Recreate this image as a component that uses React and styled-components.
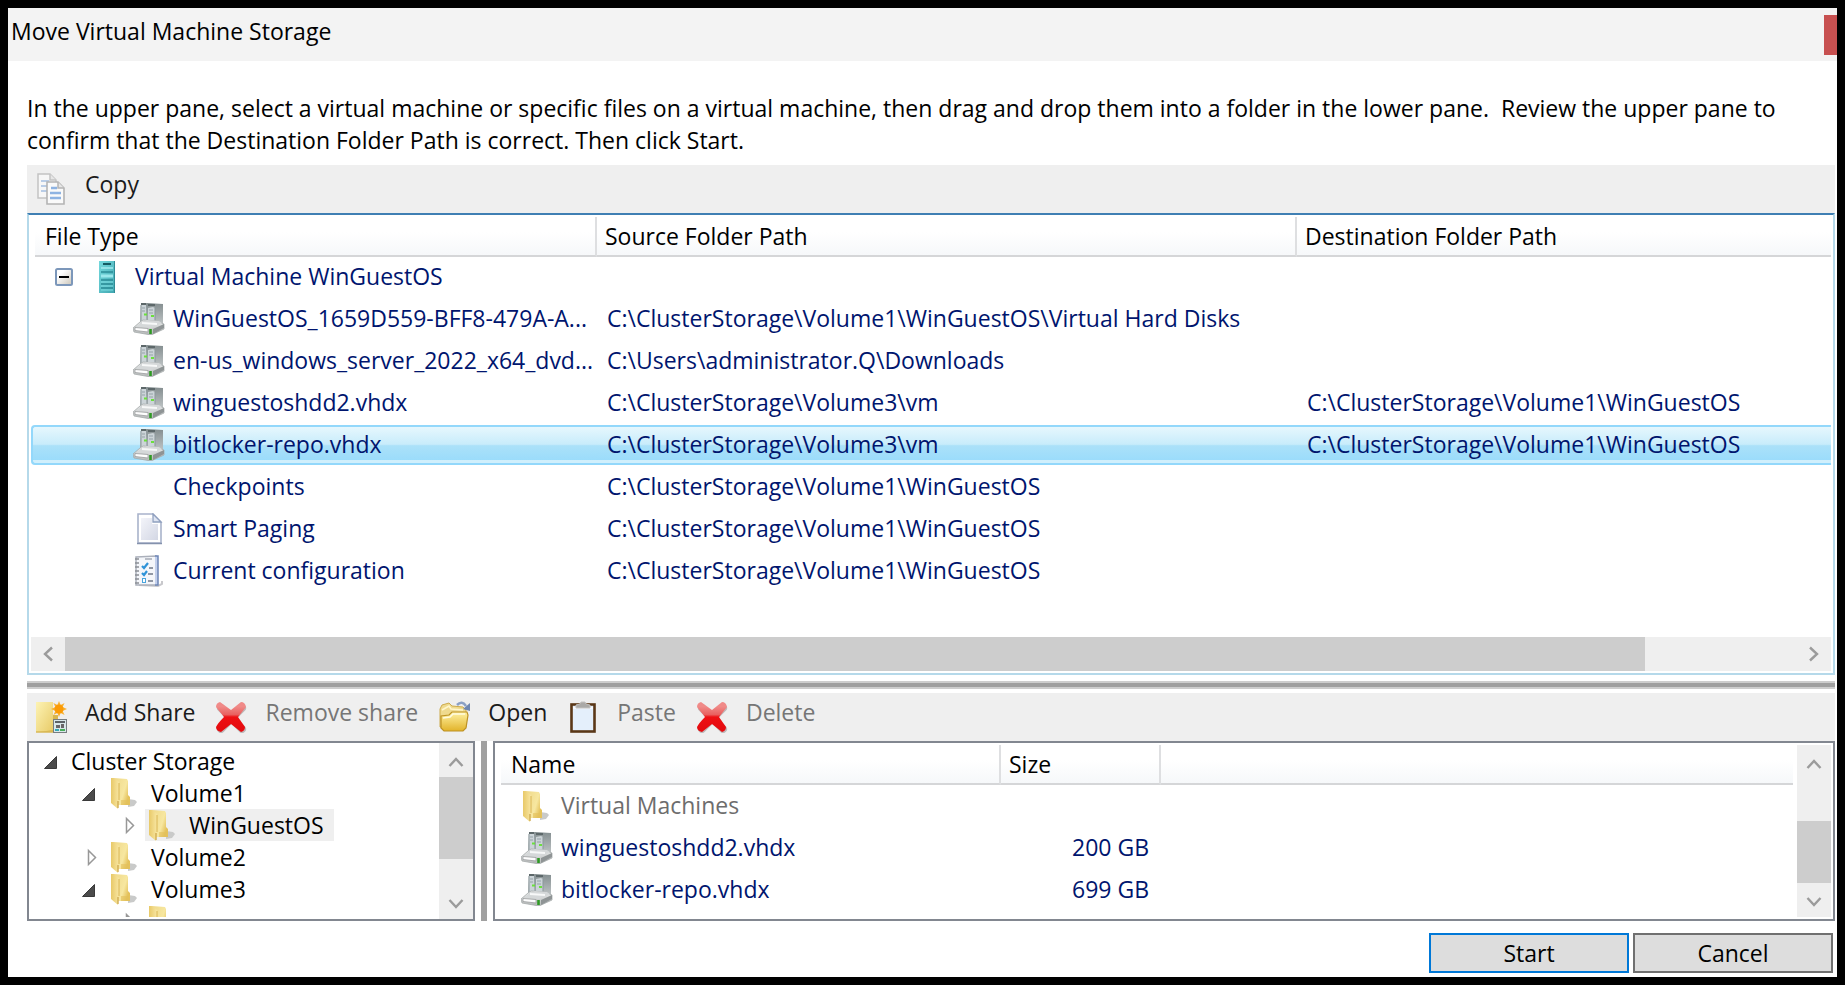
import React from "react";
import styled, { createGlobalStyle, css } from "styled-components";

const navy = "#00156e";
const FONT = '"Open Sans", "Noto Sans", "Liberation Sans", sans-serif';

const GlobalStyle = createGlobalStyle`
  *, *::before, *::after { box-sizing: border-box; }
  body { margin: 0; background: #000; color: #000; font: 23px/32px ${FONT}; }
  button { font: inherit; color: inherit; margin: 0; padding: 0; border: 0; background: none; }
  svg { display: block; flex: none; }
`;

const Dialog = styled.main`
  display: flex;
  flex-direction: column;
  min-height: 100vh;
  border: 8px solid #000;
  background: #fff;
`;

const TitleBar = styled.header`
  display: flex;
  align-items: center;
  justify-content: space-between;
  height: 53px;
  padding-left: 3px;
  background: #f3f3f3;
`;

const Title = styled.h1`
  margin: 0;
  padding-bottom: 8px;
  font-size: 23px;
  font-weight: 400;
  line-height: 32px;
`;

const CloseButton = styled.button`
  width: 13px;
  height: 40px;
  background: #c75050;
`;

const Content = styled.div`
  display: flex;
  flex: 1;
  flex-direction: column;
  padding: 31px 2px 4px 19px;
`;

const Instructions = styled.p`
  margin: 0;
  padding-bottom: 9px;
  white-space: pre-wrap;
`;

const Toolbar = styled.div`
  display: flex;
  gap: 20px;
  height: 48px;
  padding-left: 8px;
  background: #efefef;
`;

const ToolButton = styled.button`
  display: flex;
  align-items: center;
  gap: 18px;
  height: 48px;
  color: ${(p) => (p.disabled ? "#767676" : "#1b1b1b")};
`;

const ToolLabel = styled.span`
  align-self: flex-start;
  line-height: 38px;
`;

const UpperPane = styled.section`
  display: flex;
  flex: 1;
  flex-direction: column;
  justify-content: space-between;
  min-height: 462px;
  padding: 0 2px 2px;
  border: 2px solid #b5d9ea;
  border-top-color: #3f7fb3;
`;

const Table = styled.table`
  width: 100%;
  table-layout: fixed;
  border-spacing: 0 2px;
`;

const Col = styled.col`
  width: ${(p) => p.$width};
`;

const Th = styled.th`
  height: ${(p) => p.$height};
  padding: 0;
  font-weight: 400;
  text-align: left;
  vertical-align: top;
`;

const ThLabel = styled.div`
  height: 40px;
  margin-bottom: -2px;
  margin-left: ${(p) => (p.$first ? "4px" : "0")};
  padding: 3px ${(p) => (p.$first ? "10px" : "8px")};
  border-bottom: 2px solid #d5d6d8;
  border-right: ${(p) => (p.$last ? "0" : "2px solid #dedfe1")};
  background: linear-gradient(#fff 40%, #f6f8fa);
  white-space: nowrap;
`;

const selectedCell = css`
  border-top: 2px solid #93d8fb;
  border-bottom: 2px solid #93d8fb;
  background: linear-gradient(#e6f7fd, #c8ecfb 48%, #abe1f9 52%, #9bdcfb 92%, #d0effc 93%);
  &:first-child {
    border-left: 2px solid #93d8fb;
    border-radius: 4px 0 0 4px;
  }
`;

const Td = styled.td`
  height: 40px;
  padding: 0 12px 2px 10px;
  border: 0 solid transparent;
  color: ${(p) => (p.$muted ? "#6d6d6d" : navy)};
  text-align: ${(p) => (p.$right ? "right" : "left")};
  white-space: nowrap;
  line-height: 32px;
  ${(p) => p.$selected && selectedCell}
`;

const NameTd = styled(Td)`
  padding: 0;
`;

const NameCell = styled.div`
  display: flex;
  align-items: center;
  height: 36px;
  gap: ${(p) => (p.$root ? "12px" : "8px")};
  padding-left: ${(p) => p.$indent};
`;

const NameText = styled.span`
  padding-bottom: 2px;
`;

const IconSlot = styled.span`
  display: flex;
  width: 32px;
  height: 32px;
`;

const CollapseButton = styled.button`
  width: 18px;
  height: 18px;
  margin-right: 6px;
`;

const HScroll = styled.div`
  display: flex;
  height: 34px;
  background: #efefef;
`;

const VScroll = styled.div`
  display: flex;
  flex: none;
  flex-direction: column;
  width: 34px;
  background: #efefef;
`;

const ScrollButton = styled.button`
  flex: none;
  width: 34px;
  height: 34px;
`;

const Track = styled.div`
  display: flex;
  flex: 1;
  flex-direction: ${(p) => (p.$vertical ? "column" : "row")};
`;

const Space = styled.div`
  flex: ${(p) => p.$share};
`;

const Thumb = styled.div`
  flex: ${(p) => p.$share};
  background: #cdcdcd;
`;

const HSplitter = styled.div`
  height: 8px;
  margin: 6px 0 4px;
  border: solid #cdcdcd;
  border-width: 2px 0;
  background: #9f9f9f;
`;

const LowerPanes = styled.div`
  display: grid;
  grid-template-columns: 448px 18px minmax(0, 1fr);
  height: 180px;
`;

const VSplitter = styled.div`
  justify-self: center;
  width: 6px;
  background: #a0a0a0;
`;

const TreePane = styled.nav`
  display: flex;
  min-width: 0;
  border: 2px solid #828790;
`;

const TreeList = styled.ul`
  flex: 1;
  height: 172px;
  margin: 2px 0;
  padding: 0;
  overflow: hidden;
  list-style: none;
`;

const TreeRow = styled.li`
  display: flex;
  height: 32px;
  padding-left: ${(p) => 13 + p.$level * 38}px;
`;

const TreeToggle = styled.button`
  width: 27px;
  height: 32px;
`;

const TreeItem = styled.span`
  display: flex;
  gap: 10px;
  height: 32px;
  padding: 0 10px 0 2px;
  background: ${(p) => (p.$selected ? "#efefef" : "transparent")};
`;

const ListPane = styled.section`
  display: flex;
  gap: 4px;
  padding: 0 2px;
  border: 2px solid #828790;
  ${VScroll} { margin: 2px 0; }
`;

const ListBody = styled.div`
  flex: 1;
  min-width: 0;
`;

const Footer = styled.footer`
  display: flex;
  justify-content: flex-end;
  gap: 4px;
  padding: 12px 2px 0 0;
`;

const PushButton = styled.button`
  width: 200px;
  height: 40px;
  border: 2px solid ${(p) => (p.$primary ? "#0078d7" : "#707070")};
  background: #ddd;
`;

/* ---- Icons ---- */

const Chevron = ({ dir }) => {
  const d = {
    left: "M21 10.500L14 17L21 23.500",
    right: "M13 10.500L20 17L13 23.500",
    up: "M10.500 23L17 16L23.500 23",
    down: "M10.500 15L17 22L23.500 15",
  }[dir];
  return (
    <svg width="34" height="34" viewBox="0 0 34 34" fill="none" stroke="#9b9b9b" strokeWidth="2.4">
      <path d={d} />
    </svg>
  );
};

const CopyIcon = () => (
  <svg width="32" height="32" viewBox="0 0 32 32">
    <path d="M3 1h12l6 6v18H3z" fill="#f7f7f7" stroke="#c3c3c3" strokeWidth="1.500" />
    <path d="M15 1v6h6" fill="#e6e6e6" stroke="#c3c3c3" strokeWidth="1.500" />
    <path d="M6 8h8M6 13h6M6 18h6" stroke="#b8cce6" strokeWidth="2" />
    <path d="M12 9h11l6 6v16H12z" fill="#fafafa" stroke="#b4b4b4" strokeWidth="1.600" />
    <path d="M23 9v6h6" fill="#e6e6e6" stroke="#b4b4b4" strokeWidth="1.500" />
    <path d="M16 15h6M15 20h11M15 25h11" stroke="#8eb3e2" strokeWidth="2.400" />
  </svg>
);

const MinusBox = () => (
  <svg width="18" height="18" viewBox="0 0 18 18">
    <defs>
      <linearGradient id="minus" x2="1" y2="1">
        <stop offset="0.3" stopColor="#fff" />
        <stop offset="1" stopColor="#cbc5b8" />
      </linearGradient>
    </defs>
    <rect x="1" y="1" width="16" height="16" rx="1.500" fill="url(#minus)" stroke="#7c97ba" strokeWidth="2" />
    <path d="M4 9h10" stroke="#000" strokeWidth="2" />
  </svg>
);

const ServerIcon = () => (
  <svg width="32" height="32" viewBox="0 0 32 32">
    <defs>
      <linearGradient id="teal" x2="1" y2="1">
        <stop offset="0" stopColor="#74d9dd" />
        <stop offset="1" stopColor="#3fa6b0" />
      </linearGradient>
    </defs>
    <rect x="8" width="16" height="32" fill="url(#teal)" />
    <path d="M12 3h8" stroke="#145b63" strokeWidth="2" />
    <path d="M10 7h12" stroke="#a5edf0" strokeWidth="1.500" />
    <path d="M10 11h12M10 19h12M10 23h12M10 27h12" stroke="#2b8c96" strokeWidth="1.500" />
    <path d="M10 15h12" stroke="#9be8ec" strokeWidth="3" />
    <path d="M10 21h12M10 25h12M10 29h12" stroke="#7fdde1" strokeWidth="1.200" />
    <path d="M23.500 0v32" stroke="#308b95" />
  </svg>
);

const DriveIcon = () => (
  <svg width="32" height="32" viewBox="0 0 32 32">
    <defs>
      <linearGradient id="side" x2="0" y2="1">
        <stop offset="0" stopColor="#848e90" />
        <stop offset="1" stopColor="#c3c8c9" />
      </linearGradient>
      <linearGradient id="base" x2="0" y2="1">
        <stop offset="0" stopColor="#eceeee" />
        <stop offset="1" stopColor="#b4b7b7" />
      </linearGradient>
    </defs>
    <path d="M8 1l6-1 16 1v20l-7 2-16-4z" fill="url(#side)" />
    <path d="M8 2l5-1 1 18-6-1zM15 5l5-1 2 1v14h-7z" fill="#ccd4d8" />
    <path d="M8 2v17M14 2v16M22 5v15" stroke="#8b979b" />
    <path d="M8 1h5M15 2h7" stroke="#5d686a" strokeWidth="1.800" />
    <path d="M9 5h3M16 7h4M9 8h3M16 10h4" stroke="#95a2a8" />
    <path d="M11 11.500h3M18 13h3" stroke="#6be03c" strokeWidth="2" />
    <path d="M0 25l7-6 3-2 14 1 7 3v5l-13 6L1 29z" fill="url(#base)" stroke="#a5a9aa" strokeWidth="0.800" />
    <path d="M8 19l6-2 12 1 3 2-11 5-14-1z" fill="#d5d8d9" />
    <path d="M9 20l15 1" stroke="#f7f8f8" strokeWidth="2" />
    <path d="M2 24.500l13 1v3.500l-13-1.500z" fill="#fdfdfd" stroke="#9a9d9e" strokeWidth="0.800" />
    <path d="M20 26l11-5v4l-11 6z" fill="#8f9495" />
    <path d="M17.500 26v5" stroke="#2f9a24" strokeWidth="2.600" />
  </svg>
);

const PageIcon = () => (
  <svg width="32" height="32" viewBox="0 0 32 32">
    <defs>
      <linearGradient id="sheet" x2="1" y2="1">
        <stop offset="0" stopColor="#f3f4fa" />
        <stop offset="1" stopColor="#d3d7e4" />
      </linearGradient>
    </defs>
    <path d="M5 1h15l8 8v21H5z" fill="#fff" stroke="#a9b3cb" strokeWidth="1.600" />
    <path d="M8 5h11v6h6v16H8z" fill="url(#sheet)" />
    <path d="M20 1v8h8z" fill="#dfe5f2" stroke="#8fa0bf" strokeWidth="1.300" />
    <path d="M4 30.500h25" stroke="#8492ad" strokeWidth="1.500" />
  </svg>
);

const ConfigIcon = () => (
  <svg width="32" height="32" viewBox="0 0 32 32">
    <path d="M6 30l19 1 4-2v-3" fill="none" stroke="#c8c8cc" strokeWidth="2" />
    <path d="M3 2l20-1v29H3z" fill="#f4f6fa" stroke="#abb0bb" strokeWidth="1.500" />
    <path d="M22 1h3v29h-3" fill="#c3d0ec" stroke="#6d85b5" strokeWidth="1.500" />
    <path d="M2 4h4M2 8h4M2 12h4M2 16h4M2 20h4M2 24h4M2 28h4" stroke="#8b8e95" strokeWidth="1.600" />
    <path d="M12 4h7" stroke="#a6aab4" strokeWidth="1.500" />
    <path d="M9 11l2 2 4-5M9 18l2 2 3-4" fill="none" stroke="#2f93d8" strokeWidth="2.200" />
    <path d="M16 13h4M15 19h5M15 26h5" stroke="#6f7888" strokeWidth="1.600" />
    <rect x="9.500" y="23.500" width="3" height="4" fill="#fff" stroke="#4aa5dd" />
  </svg>
);

const FolderIcon = () => (
  <svg width="32" height="32" viewBox="0 0 32 32">
    <defs>
      <linearGradient id="folderBack" x2="1" y2="0.500">
        <stop offset="0" stopColor="#efd888" />
        <stop offset="0.700" stopColor="#f7e7a0" />
        <stop offset="1" stopColor="#e4c25c" />
      </linearGradient>
      <linearGradient id="folderFront" x2="1" y2="0">
        <stop offset="0" stopColor="#e8c968" />
        <stop offset="1" stopColor="#f8e6a2" />
      </linearGradient>
    </defs>
    <path d="M19 22l7 1 2 2-3 4-6 1z" fill="#c9cac9" />
    <path d="M5 1l13 1 1 2v14l2 2v8H9z" fill="url(#folderBack)" />
    <path d="M2 1l3 0 5 4v18l-1 9-7-6z" fill="url(#folderFront)" />
    <path d="M10 6v17" stroke="#d9b654" />
    <path d="M9 24v7" stroke="#c9a245" strokeWidth="1.200" />
    <path d="M12 23h8v5h-8z" fill="#e2c05a" opacity="0.600" />
  </svg>
);

const AddShareIcon = () => (
  <svg width="32" height="32" viewBox="0 0 32 32">
    <defs>
      <linearGradient id="share" x2="1" y2="1">
        <stop offset="0" stopColor="#fdf3b4" />
        <stop offset="1" stopColor="#e8cb68" />
      </linearGradient>
    </defs>
    <path d="M1 1h17v30H1z" fill="url(#share)" />
    <path d="M18 14h5v17H5l13-2z" fill="#d9b64e" />
    <path d="M1 31h18" stroke="#d8b856" strokeWidth="1.500" />
    <path
      d="M24 0l1.600 4 4-2-2 4 4.400 2-4.400 2 2 4-4-2L24 16l-1.600-4-4 2 2-4L16 8l4.400-2-2-4 4 2z"
      fill="#f9b233"
    />
    <circle cx="24" cy="8" r="4.500" fill="#fb9b06" />
    <rect x="18.500" y="18.500" width="13" height="13" fill="#d9e7ea" stroke="#777d80" />
    <path d="M20 21h10" stroke="#5d6367" strokeWidth="2" />
    <path d="M21 24h4v3h-4zM26 23h3v4h-3z" fill="#6a6668" />
    <path d="M20 29h4" stroke="#36a9b7" strokeWidth="2" />
    <path d="M25 29h5" stroke="#49ad5b" strokeWidth="2" />
  </svg>
);

const CrossIcon = () => (
  <svg width="32" height="32" viewBox="0 0 32 32">
    <defs>
      <linearGradient id="cross" x2="0" y2="1">
        <stop offset="0.150" stopColor="#f08a88" />
        <stop offset="0.420" stopColor="#e9605f" />
        <stop offset="0.500" stopColor="#ee1013" />
        <stop offset="1" stopColor="#e30a0e" />
      </linearGradient>
    </defs>
    <path d="M6 7L27 28M27 7L6 28" stroke="#8d8383" strokeOpacity="0.500" strokeWidth="8" strokeLinecap="round" />
    <path
      d="M5 1Q1 2 1 6L9 16Q3 22 1 26Q1 30 6 31L16 23L26 31Q30 30 30 26L23 16L31 6Q30 1 26 1L16 9Z"
      fill="url(#cross)"
    />
  </svg>
);

const OpenIcon = () => (
  <svg width="32" height="32" viewBox="0 0 32 32">
    <defs>
      <linearGradient id="open" x2="0" y2="1">
        <stop offset="0" stopColor="#fff2a3" />
        <stop offset="1" stopColor="#e2b32a" />
      </linearGradient>
    </defs>
    <path d="M2 26V8l2-4 7-2 3 3 11 1 3 3v17z" fill="#efda8e" stroke="#cdab4c" />
    <path d="M4 9l7-4 2 3 12 1" fill="none" stroke="#fff6cc" strokeWidth="1.600" />
    <path d="M19 4q5-5 9 1" fill="none" stroke="#8ba0c4" strokeWidth="2.500" />
    <path d="M32 2v8l-7-2z" fill="#6f87b1" />
    <path d="M3 27V15l8-1 3-3h15l1 3-2 13-3 3H6z" fill="url(#open)" stroke="#bd9224" strokeWidth="1.200" />
    <path d="M5 17l7-1 3-3h12" fill="none" stroke="#fffbe0" strokeWidth="1.600" />
  </svg>
);

const PasteIcon = () => (
  <svg width="32" height="32" viewBox="0 0 32 32">
    <rect x="4.500" y="3.500" width="23" height="27" fill="#e4effb" stroke="#5a3717" strokeWidth="2.600" />
    <path d="M6 6h20v2H6z" fill="#f5f9fe" />
    <path d="M9 7V4l4-1 1-2h4l1 2 4 1v3z" fill="#aaa9a7" stroke="#c3c2c0" />
  </svg>
);

const TreeArrow = ({ open }) => (
  <svg width="27" height="32" viewBox="0 0 27 32">
    {open ? (
      <path d="M14.500 11.500v12H2.500z" fill="#4b4b4b" stroke="#3a3a3a" />
    ) : (
      <path d="M8.500 9.500v14l7-7z" fill="#fff" stroke="#989898" strokeWidth="1.500" />
    )}
  </svg>
);

/* ---- Data ---- */

const files = [
  { icon: DriveIcon, name: "WinGuestOS_1659D559-BFF8-479A-A...", source: "C:\\ClusterStorage\\Volume1\\WinGuestOS\\Virtual Hard Disks" },
  { icon: DriveIcon, name: "en-us_windows_server_2022_x64_dvd...", source: "C:\\Users\\administrator.Q\\Downloads" },
  { icon: DriveIcon, name: "winguestoshdd2.vhdx", source: "C:\\ClusterStorage\\Volume3\\vm", target: "C:\\ClusterStorage\\Volume1\\WinGuestOS" },
  { icon: DriveIcon, name: "bitlocker-repo.vhdx", source: "C:\\ClusterStorage\\Volume3\\vm", target: "C:\\ClusterStorage\\Volume1\\WinGuestOS", selected: true },
  { name: "Checkpoints", source: "C:\\ClusterStorage\\Volume1\\WinGuestOS" },
  { icon: PageIcon, name: "Smart Paging", source: "C:\\ClusterStorage\\Volume1\\WinGuestOS" },
  { icon: ConfigIcon, name: "Current configuration", source: "C:\\ClusterStorage\\Volume1\\WinGuestOS" },
];

const tree = [
  { level: 0, name: "Cluster Storage", open: true },
  { level: 1, name: "Volume1", open: true, folder: true },
  { level: 2, name: "WinGuestOS", folder: true, selected: true },
  { level: 1, name: "Volume2", folder: true },
  { level: 1, name: "Volume3", open: true, folder: true },
  { level: 2, name: "", folder: true },
];

const folderItems = [
  { icon: FolderIcon, name: "Virtual Machines", size: "", muted: true },
  { icon: DriveIcon, name: "winguestoshdd2.vhdx", size: "200 GB" },
  { icon: DriveIcon, name: "bitlocker-repo.vhdx", size: "699 GB" },
];

const tools = [
  { icon: AddShareIcon, label: "Add Share" },
  { icon: CrossIcon, label: "Remove share", disabled: true },
  { icon: OpenIcon, label: "Open" },
  { icon: PasteIcon, label: "Paste", disabled: true },
  { icon: CrossIcon, label: "Delete", disabled: true },
];

const Tool = ({ icon: Icon, label, disabled }) => (
  <ToolButton type="button" disabled={disabled}>
    <Icon />
    <ToolLabel>{label}</ToolLabel>
  </ToolButton>
);

const VerticalScrollbar = ({ before, thumb, after }) => (
  <VScroll>
    <ScrollButton type="button" aria-label="Scroll up"><Chevron dir="up" /></ScrollButton>
    <Track $vertical>
      <Space $share={before} />
      <Thumb $share={thumb} />
      <Space $share={after} />
    </Track>
    <ScrollButton type="button" aria-label="Scroll down"><Chevron dir="down" /></ScrollButton>
  </VScroll>
);

export default function App() {
  return (
    <>
      <GlobalStyle />
      <Dialog>
        <TitleBar>
          <Title>Move Virtual Machine Storage</Title>
          <CloseButton type="button" aria-label="Close" />
        </TitleBar>
        <Content>
          <Instructions>
            {"In the upper pane, select a virtual machine or specific files on a virtual machine, then drag and drop them into a folder in the lower pane.  Review the upper pane to confirm that the Destination Folder Path is correct. Then click Start."}
          </Instructions>
          <Toolbar>
            <Tool icon={CopyIcon} label="Copy" />
          </Toolbar>
          <UpperPane>
            <Table>
              <colgroup>
                <Col $width="566px" />
                <Col $width="700px" />
                <Col $width="auto" />
              </colgroup>
              <thead>
                <tr>
                  <Th $height="38px"><ThLabel $first>File Type</ThLabel></Th>
                  <Th $height="38px"><ThLabel>Source Folder Path</ThLabel></Th>
                  <Th $height="38px"><ThLabel $last>Destination Folder Path</ThLabel></Th>
                </tr>
              </thead>
              <tbody>
                <tr>
                  <NameTd colSpan={3}>
                    <NameCell $root $indent="24px">
                      <CollapseButton type="button" aria-label="Collapse"><MinusBox /></CollapseButton>
                      <ServerIcon />
                      <NameText>Virtual Machine WinGuestOS</NameText>
                    </NameCell>
                  </NameTd>
                </tr>
                {files.map(({ icon: Icon, name, source, target, selected }) => (
                  <tr key={name}>
                    <NameTd $selected={selected}>
                      <NameCell $indent={selected ? "100px" : "102px"}>
                        <IconSlot>{Icon && <Icon />}</IconSlot>
                        <NameText>{name}</NameText>
                      </NameCell>
                    </NameTd>
                    <Td $selected={selected}>{source}</Td>
                    <Td $selected={selected}>{target}</Td>
                  </tr>
                ))}
              </tbody>
            </Table>
            <HScroll>
              <ScrollButton type="button" aria-label="Scroll left"><Chevron dir="left" /></ScrollButton>
              <Track>
                <Thumb $share={912} />
                <Space $share={88} />
              </Track>
              <ScrollButton type="button" aria-label="Scroll right"><Chevron dir="right" /></ScrollButton>
            </HScroll>
          </UpperPane>
          <HSplitter />
          <Toolbar>
            {tools.map((tool) => (
              <Tool key={tool.label} {...tool} />
            ))}
          </Toolbar>
          <LowerPanes>
            <TreePane aria-label="Folders">
              <TreeList>
                {tree.map(({ level, name, open, folder, selected }, i) => (
                  <TreeRow key={i} $level={level}>
                    <TreeToggle type="button" aria-label={open ? "Collapse" : "Expand"}>
                      <TreeArrow open={open} />
                    </TreeToggle>
                    <TreeItem $selected={selected}>
                      {folder && <FolderIcon />}
                      {name}
                    </TreeItem>
                  </TreeRow>
                ))}
              </TreeList>
              <VerticalScrollbar before={0} thumb={82} after={26} />
            </TreePane>
            <VSplitter />
            <ListPane>
              <ListBody>
                <Table>
                  <colgroup>
                    <Col $width="504px" />
                    <Col $width="160px" />
                    <Col $width="auto" />
                  </colgroup>
                  <thead>
                    <tr>
                      <Th $height="39px"><ThLabel $first>Name</ThLabel></Th>
                      <Th $height="39px"><ThLabel>Size</ThLabel></Th>
                      <Th $height="39px"><ThLabel $last /></Th>
                    </tr>
                  </thead>
                  <tbody>
                    {folderItems.map(({ icon: Icon, name, size, muted }) => (
                      <tr key={name}>
                        <NameTd $muted={muted}>
                          <NameCell $indent="24px">
                            <IconSlot><Icon /></IconSlot>
                            <NameText>{name}</NameText>
                          </NameCell>
                        </NameTd>
                        <Td $right>{size}</Td>
                        <Td />
                      </tr>
                    ))}
                  </tbody>
                </Table>
              </ListBody>
              <VerticalScrollbar before={42} thumb={62} after={0} />
            </ListPane>
          </LowerPanes>
          <Footer>
            <PushButton type="button" $primary>Start</PushButton>
            <PushButton type="button">Cancel</PushButton>
          </Footer>
        </Content>
      </Dialog>
    </>
  );
}
